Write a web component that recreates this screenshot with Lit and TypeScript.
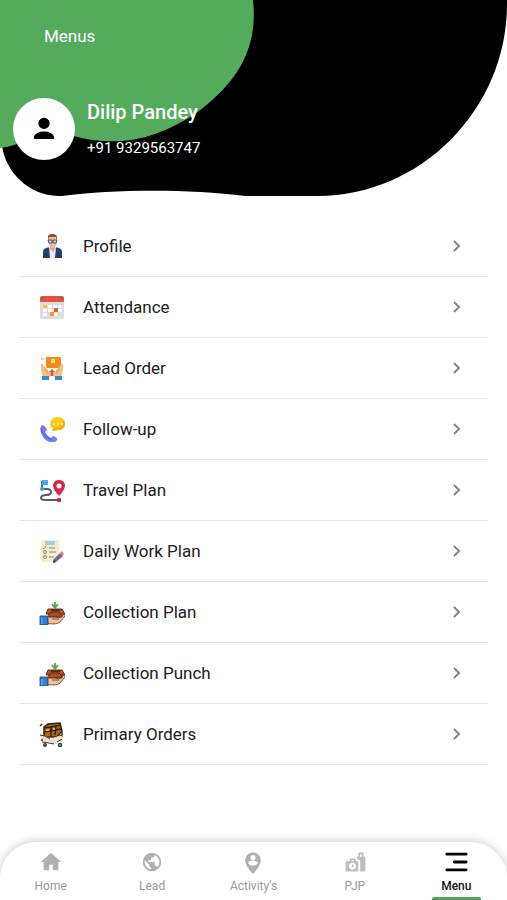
import { LitElement, html, svg, css } from "lit";
import { customElement, property } from "lit/decorators.js";
import { classMap } from "lit/directives/class-map.js";

const collectionArt = svg`
  <path d="M1 17h8v9H1z" fill="#2f7fd6" stroke="#1d4574" stroke-width=".8"/>
  <path d="M2.500 19h1v6h-1z" fill="#78b5ee"/>
  <path d="M9 18c3-2 5-2 8 0l3 1 5-4c1 0 1.500 1 1 2l-5 6c-3 2.500-8 2-12 1.500z" fill="#f3bf9c" stroke="#54382d" stroke-width=".8"/>
  <path d="M13 20h7" stroke="#54382d" stroke-width=".8"/>
  <path d="M9 11h14v7H10z" fill="#a94d25" stroke="#4f2415" stroke-width=".9"/>
  <path d="M9 10h14l3 5h-4l-2-2h-8l-2 2H7z" fill="#b9562c" stroke="#4f2415" stroke-width=".9"/>
  <path d="M12 10h9v2h-9z" fill="#5a2a1a"/>
  <path d="M16 3v6M13 5l3 4 3-4" fill="none" stroke="#56a845" stroke-width="1.800"/>`;

const ART: Record<string, unknown> = {
  profile: svg`
    <path d="M4 25v-6q0-3 3-4l4-1h5l4 1q3 1 3 4v6z" fill="#24426d"/>
    <path d="M10 14h7l-1 11h-5z" fill="#e9eef4"/>
    <path d="M11 12h5v4l-2 3-3-3z" fill="#e2a988"/>
    <path d="M9 5q4-3 9 0v4q-1 6-4 6-4 0-5-6z" fill="#efbb9a"/>
    <path d="M9 7V3q1-2 5-2 5 0 4 6l-1-3h-7z" fill="#8a4c38"/>
    <path d="M9 7h4v3h-3zM14 7h4l-1 3h-3z" fill="#c9dbea" stroke="#38475d" stroke-width=".9"/>
    <path d="M7 21v4M20 21v4" stroke="#172d50"/>`,
  attendance: svg`
    <rect x="1" y="3" width="24" height="22" rx="2" fill="#dcdfe2"/>
    <path d="M1 8V4q0-2 2-2h20q2 0 2 2v4z" fill="#e7503a"/>
    <circle cx="4" cy="4" r="1.500" fill="#6f7181"/><circle cx="22" cy="4" r="1.500" fill="#6f7181"/>
    <g fill="#fff"><path d="M4 11h4v3H4zM9 11h4v3H9zM14 11h4v3h-4zM19 11h4v3h-4zM4 15h4v3H4zM9 15h4v3H9zM19 15h4v3h-4zM4 19h4v3H4zM14 19h4v3h-4z"/></g>
    <path d="M4 11h4v3H4z" fill="#f2c63d"/><path d="M15 14h4v4h-4z" fill="#e65d45"/><path d="M11 18h4v4h-4z" fill="#f29b32"/>`,
  order: svg`
    <rect x="7" y="2" width="15" height="11" rx="1" fill="#f08c1d"/>
    <path d="M12 4h4v4h-4z" fill="#ffd29a"/>
    <path d="M2 4h4M3 2v3" stroke="#edc49a"/>
    <path d="M2 9q2-1 3 2l3 3 3 3v5H4L2 16zM24 9q-2-1-3 2l-3 3-3 3v5h7l2-6z" fill="#f4bf81"/>
    <path d="M6 14l3 4M20 14l-3 4" stroke="#d98d48"/>
    <path d="M13 14l3 3h-1.500v4h-3v-4H10z" fill="#df522a"/>
    <path d="M3 21h7v4H3zM16 21h7v4h-7z" fill="#398bc5"/>`,
  follow: svg`
    <path d="M11 8q1-7 8-7 7 1 7 7 0 6-7 6l-6 1 1-3q-3-1-3-4z" fill="#f7c91c"/>
    <path d="M26 7q0 7-7 7l-6 1 2-3q8 0 9-9 2 2 2 4z" fill="#eeb50c"/>
    <g fill="#fff3b0"><circle cx="15" cy="8" r="1"/><circle cx="19" cy="8" r="1"/><circle cx="23" cy="8" r="1"/></g>
    <path d="M2 10q3-2 5 2l1 2-2 2q2 4 6 6l2-2 4 2q1 2-2 4-7 2-12-5Q0 15 2 10z" fill="#7180ee"/>
    <path d="M2 12q2 8 11 12" fill="none" stroke="#5159cf"/>`,
  travel: svg`
    <path d="M3 12h6q4 1 3 4-1 2-5 2-5 0-5 3 0 2 4 2h13" fill="none" stroke="#58606a" stroke-width="2"/>
    <path d="M3 12V4" stroke="#317bb8" stroke-width="2"/><path d="M3 3h6v5H3z" fill="#46a9eb"/>
    <circle cx="3" cy="12" r="2" fill="#3c9de0"/>
    <path d="M20 19q-6-6-6-11 1-5 6-5t6 5q0 5-6 11z" fill="#da244b"/><circle cx="20" cy="9" r="2.500" fill="#fff"/>
    <circle cx="20" cy="23" r="2.300" fill="#da244b"/>`,
  daily: svg`
    <rect x="2" y="2" width="18" height="22" rx="1" fill="#faedc5"/>
    <path d="M6 3h10v4H6z" fill="#91d5ec"/>
    <g fill="none" stroke="#7d8582"><path d="M4 10l1 1 2-3" stroke="#e0847b"/><circle cx="6" cy="14" r="1.500"/><circle cx="6" cy="19" r="1.500"/><path d="M10 10h6M10 14h7M10 19h5"/></g>
    <path d="M14 25l1-4 6-6 3 3-7 6z" fill="#7564a5"/><path d="M21 15l2-2 2 3-2 2z" fill="#e1857c"/><path d="M14 25l1-4 2 3z" fill="#413b62"/>`,
  collection: collectionArt,
  primary: svg`
    <path d="M5 6l4-3 12-1 2 8-5 6H5z" fill="#a8681d" stroke="#32210f" stroke-width="1.500"/>
    <path d="M5 7l7-1 10-2M12 6v9M17 5l-1 9M5 11l17-3" stroke="#32210f" stroke-width="1.500"/>
    <path d="M7 8h3v2H7zM14 7h2v2h-2z" fill="#efaf39"/>
    <path d="M1 14l6 1 5 3 4-2 8-3 1 4-6 4-5 1-5-1H3z" fill="#f1dcc1"/>
    <path d="M1 14l5 1 5 3M3 21l7 1 5 1M16 16l4-2 4 1M18 21l5-3" fill="none" stroke="#373737"/>
    <g fill="none" stroke="#373737" stroke-width="1.500"><circle cx="6" cy="24" r="1.200"/><circle cx="21" cy="24" r="1.500"/><path d="M1 5l2-2M2 19h2M23 11v3"/></g>`,
};

const ROWS: [string, string][] = [
  ["profile", "Profile"],
  ["attendance", "Attendance"],
  ["order", "Lead Order"],
  ["follow", "Follow-up"],
  ["travel", "Travel Plan"],
  ["daily", "Daily Work Plan"],
  ["collection", "Collection Plan"],
  ["collection", "Collection Punch"],
  ["primary", "Primary Orders"],
];

interface Tab {
  name: string;
  box: string;
  art: unknown;
}

const TABS: Tab[] = [
  { name: "Home", box: "-1 -1 26 26", art: svg`<path d="M10 21v-6h4v6h6v-9h3L12 2 1 12h3v9z"/>` },
  { name: "Lead", box: "-1 -1 26 26", art: svg`<path d="M12 2a10 10 0 1 0 0 20 10 10 0 0 0 0-20zm-1 17.930A8 8 0 0 1 4.210 10.210L9 15v1c0 1.100.9 2 2 2zm6.900-2.540A2 2 0 0 0 16 16h-1v-3c0-.550-.450-1-1-1H8v-2h2c.550 0 1-.450 1-1V7h2c1.100 0 2-.9 2-2v-.410a8 8 0 0 1 2.900 12.800z"/>` },
  { name: "Activity's", box: "-1 -3 26 29", art: svg`<path fill-rule="evenodd" d="M12 0a9.500 9.500 0 0 0-9.500 9.500C2.500 17 12 26 12 26s9.500-9 9.500-16.500A9.500 9.500 0 0 0 12 0zm0 3a3.200 3.200 0 1 1 0 6.400A3.200 3.200 0 0 1 12 3zm0 13a7 7 0 0 1-6-3.200c0-2 4-3 6-3s6 1 6 3A7 7 0 0 1 12 16z"/>` },
  { name: "PJP", box: "-2 -2 28 28", art: svg`<g fill="#bdbdbd"><path fill-rule="evenodd" d="M2 11h4V9q0-1 1-1h5q1 0 1 1v2h2q1 0 1 1v10q0 1-1 1H2q-1 0-1-1V12q0-1 1-1zm6 0h3v-1H8zm1 2a4 4 0 1 0 0 8 4 4 0 0 0 0-8z"/><path d="M9 15v2h2" fill="none" stroke="#bdbdbd" stroke-width="1.500"/><path d="M15 6h1V1h6v5h1q1 0 1 1v15q0 1-1 1h-5V11q0-2-2-2h-2V7q0-1 1-1zm3-3v3h2V3z" fill-rule="evenodd"/></g>` },
  { name: "Menu", box: "-1 -1 26 26", art: svg`<path d="M2 3.500h21M10 12h13M2 20.500h21" fill="none" stroke="currentColor" stroke-width="3" stroke-linecap="round"/>` },
];

@customElement("profile-header")
export class ProfileHeader extends LitElement {
  static styles = css`
    :host { display: block; position: relative; color: #fff; }
    .backdrop { position: absolute; inset: 0; width: 100%; height: 100%; }
    .content { position: relative; padding: 25px 13px 36px; }
    .title { margin: 0 0 51px 31px; font-size: 17px; line-height: 22px; font-weight: 400; }
    .person { display: flex; align-items: center; gap: 12px; }
    .avatar { display: grid; place-items: center; width: 62px; height: 62px; border-radius: 50%; background: #fff; color: #000; }
    .avatar svg { width: 30px; height: 30px; fill: currentColor; }
    .name { margin: 0 0 14px; font-size: 20px; line-height: 24px; font-weight: 500; }
    .phone { margin: 0; font-size: 15px; line-height: 20px; }
  `;
  render() {
    return html`
      <svg class="backdrop" viewBox="0 0 507 196" preserveAspectRatio="none" aria-hidden="true">
        <path d="M0 0H507V4C507 110 420 196 318 196H245C190 189 115 189 62 196C30 197 6 173 2 146L0 148Z"/>
        <path d="M0 0H253C258 46 240 80 199 111C158 140 117 148 73 136C40 128 25 145 0 148Z" fill="#53ab5b"/>
      </svg>
      <div class="content">
        <h1 class="title">Menus</h1>
        <div class="person">
          <div class="avatar"><svg viewBox="0 0 24 24" aria-hidden="true"><path d="M12 12a4.500 4.500 0 1 0 0-9 4.500 4.500 0 0 0 0 9zm0 2c-3 0-8 1.500-8 4.500V20h16v-1.500c0-3-5-4.500-8-4.500z"/></svg></div>
          <div><h2 class="name">Dilip Pandey</h2><p class="phone">+91 9329563747</p></div>
        </div>
      </div>`;
  }
}

@customElement("menu-row")
export class MenuRow extends LitElement {
  @property() icon = "";
  @property() label = "";
  static styles = css`
    :host { display: block; }
    .row { display: flex; align-items: center; width: 100%; height: 61px; box-sizing: border-box; margin: 0; padding: 0 22px 0 19px; border: 0; border-bottom: 1px solid #e2e2e2; background: none; color: #202020; font: 400 17px/24px Roboto, sans-serif; text-align: left; cursor: pointer; }
    .art { width: 26px; height: 26px; margin-right: 18px; }
    .label { flex: 1; }
    .chevron { width: 18px; height: 18px; fill: none; stroke: #858585; stroke-width: 2; }
  `;
  render() {
    return html`<button class="row" type="button">
      <svg class="art" viewBox="0 0 26 26" aria-hidden="true">${ART[this.icon]}</svg>
      <span class="label">${this.label}</span>
      <svg class="chevron" viewBox="0 0 18 18" aria-hidden="true"><path d="M6 4l5 5-5 5"/></svg>
    </button>`;
  }
}

@customElement("tab-bar")
export class TabBar extends LitElement {
  @property() active = "";
  static styles = css`
    :host { display: block; position: sticky; bottom: 0; }
    .tabs { display: grid; grid-template-columns: repeat(5, 1fr); height: 58px; background: #fff; border-radius: 36px 36px 0 0; box-shadow: 0 -1px 9px rgba(0, 0, 0, 0.2); overflow: hidden; }
    .tab { display: flex; flex-direction: column; align-items: center; color: #999; text-decoration: none; font-size: 12px; line-height: 16px; padding-top: 8px; }
    .icon { width: 24px; height: 24px; margin-bottom: 4px; fill: currentColor; color: #b0b0b0; }
    .active { color: #111; font-weight: 500; }
    .active .icon { color: #000; }
    .marker { width: 49px; height: 3px; margin-top: auto; border-radius: 2px 2px 0 0; }
    .active .marker { background: #4fa35a; }
  `;
  render() {
    return html`<nav class="tabs" aria-label="Main">
      ${TABS.map(({ name, box, art }) => {
        const on = name === this.active;
        return html`<a class=${classMap({ tab: true, active: on })} href="#" aria-current=${on ? "page" : "false"}>
          <svg class="icon" viewBox=${box} aria-hidden="true">${art}</svg>
          <span>${name}</span><span class="marker"></span>
        </a>`;
      })}
    </nav>`;
  }
}

@customElement("app-root")
export class AppRoot extends LitElement {
  static styles = css`
    :host { display: flex; flex-direction: column; min-height: 100vh; background: #fff; font-family: Roboto, sans-serif; }
    .list { flex: 1; list-style: none; margin: 0; padding: 20px 19px 40px 20px; }
  `;
  render() {
    return html`
      <profile-header></profile-header>
      <ul class="list">
        ${ROWS.map(([icon, label]) => html`<li><menu-row icon=${icon} label=${label}></menu-row></li>`)}
      </ul>
      <tab-bar active="Menu"></tab-bar>`;
  }
}
